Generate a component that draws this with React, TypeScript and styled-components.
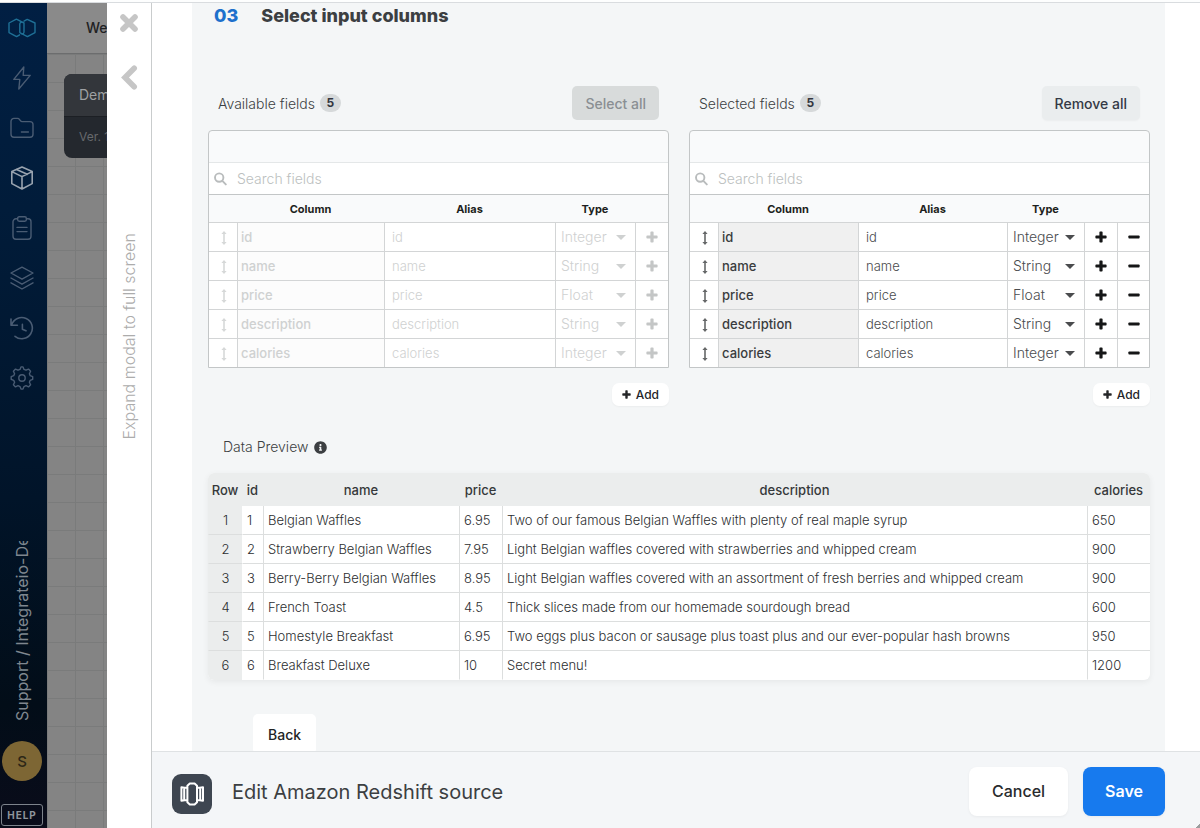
import React from 'react';
import styled, { createGlobalStyle, css } from 'styled-components';
import { FaInfoCircle } from 'react-icons/fa';

const GlobalStyle = createGlobalStyle`
  *, *::before, *::after { box-sizing: border-box; }
  body {
    margin: 0;
    background: #fff;
    font-family: Inter, "Liberation Sans", sans-serif;
    color: #3c3f42;
  }
  button, input, select { font-family: inherit; color: inherit; }
  button { cursor: pointer; }
`;

/* ---------- page frame ---------- */

const Page = styled.div`
  display: flex;
  flex-direction: column;
  height: 100vh;
  overflow: hidden;
`;

const TopStrip = styled.div`
  flex: none;
  height: 3px;
  background: #fdfefe;
  border-bottom: 1px solid #d9dcdf;
`;

const Shell = styled.div`
  flex: 1;
  min-height: 0;
  display: flex;
`;

/* ---------- side navigation ---------- */

const Sidebar = styled.nav`
  flex: none;
  width: 47px;
  display: flex;
  flex-direction: column;
  align-items: center;
  padding-right: 3px;
  background: linear-gradient(#011f43 0%, #011c3a 25%, #011429 60%, #020d18 85%, #0a0c1a 100%);
`;

const NavLink = styled.a<{ $active?: boolean; $brand?: boolean }>`
  display: flex;
  align-items: center;
  justify-content: center;
  width: 44px;
  height: 50px;
  color: ${(p) => (p.$brand ? '#1f7096' : p.$active ? '#99a3af' : '#4a5c73')};
`;

const AccountName = styled.div`
  margin-top: auto;
  height: 180px;
  overflow: hidden;
  writing-mode: vertical-rl;
  transform: rotate(180deg);
  white-space: nowrap;
  font-size: 16px;
  line-height: 20px;
  font-weight: 400;
  color: #7f878f;
`;

const Avatar = styled.button`
  flex: none;
  width: 40px;
  height: 40px;
  margin-top: 20px;
  padding: 0;
  border: 0;
  border-radius: 50%;
  background: #7d6634;
  color: #2c2617;
  font-size: 15px;
  font-weight: 500;
`;

const HelpButton = styled.button`
  flex: none;
  width: 42px;
  height: 22px;
  margin: 23px 0 2px;
  padding: 0;
  border: 1px solid #7d838b;
  border-radius: 3px;
  background: transparent;
  color: #8e949b;
  font-size: 10px;
  font-weight: 700;
  letter-spacing: 1px;
`;

/* ---------- dimmed workspace ---------- */

const Workspace = styled.div`
  flex: none;
  width: 60px;
  overflow: hidden;
  display: flex;
  flex-direction: column;
  background: #848484;
`;

const WorkspaceBar = styled.div`
  flex: none;
  height: 51px;
  padding-left: 39px;
  border-bottom: 1px solid #6c6d6e;
  background: #8a8a8a;
  color: #202122;
  font-size: 14px;
  font-weight: 500;
  line-height: 50px;
  white-space: nowrap;
`;

const Canvas = styled.div`
  flex: 1;
  padding: 20px 0 0 17px;
  background-image:
    linear-gradient(#7a7b7b 1px, transparent 1px),
    linear-gradient(90deg, #7a7b7b 1px, transparent 1px);
  background-size: 28px 28px;
`;

const PackageCard = styled.div`
  width: 180px;
  border-radius: 8px;
  overflow: hidden;
  background: #24282e;
`;

const PackageName = styled.div`
  height: 43px;
  padding-left: 15px;
  border-bottom: 1px solid #1c1f24;
  background: #33363b;
  color: #9fa1a3;
  font-size: 14px;
  line-height: 42px;
`;

const PackageVersion = styled.div`
  height: 41px;
  padding-left: 15px;
  color: #67696c;
  font-size: 12px;
  line-height: 40px;
`;

/* ---------- modal ---------- */

const Rail = styled.div`
  flex: none;
  width: 45px;
  display: flex;
  flex-direction: column;
  align-items: center;
  padding-top: 8px;
  border-right: 1px solid #c9cccd;
  background: #fff;
`;

const RailButton = styled.button`
  display: flex;
  align-items: center;
  justify-content: center;
  width: 28px;
  height: 24px;
  margin-bottom: 30px;
  padding: 0;
  border: 0;
  background: none;
  color: #c6c6c6;
`;

const ExpandButton = styled.button`
  margin-top: 114px;
  padding: 0;
  border: 0;
  background: none;
  writing-mode: vertical-rl;
  transform: rotate(180deg);
  color: #acacac;
  font-size: 16px;
  font-weight: 300;
  line-height: 20px;
  white-space: nowrap;
`;

const Modal = styled.main`
  flex: 1;
  min-width: 0;
  display: flex;
  flex-direction: column;
  background: #fff;
`;

const ModalBody = styled.div`
  flex: 1;
  min-height: 0;
  overflow: hidden;
  padding: 0 35px 0 40px;
`;

const Step = styled.section`
  min-height: 100%;
  padding: 0 15px 0 16px;
  background: #f4f6f7;
`;

const StepTitle = styled.h2`
  display: flex;
  gap: 23px;
  margin: 0 0 57px;
  padding-left: 6px;
  font-size: 18px;
  font-weight: 800;
  line-height: 26px;
`;

const StepNumber = styled.span`
  color: #1d70cc;
`;

const FieldPanels = styled.div`
  display: grid;
  grid-template-columns: 1fr 1fr;
  gap: 20px;
`;

const PanelHead = styled.div`
  display: flex;
  align-items: center;
  gap: 5px;
  height: 34px;
  margin-bottom: 10px;
  padding: 0 10px;
  font-size: 14px;
  font-weight: 300;
`;

const CountBadge = styled.span`
  min-width: 21px;
  border-radius: 9px;
  background: #d6d9da;
  color: #33363f;
  font-size: 12px;
  font-weight: 700;
  line-height: 18px;
  text-align: center;
`;

const BulkButton = styled.button`
  margin-left: auto;
  height: 34px;
  padding: 0 13px;
  border: 0;
  border-radius: 5px;
  background: #eaedee;
  color: #343945;
  font-size: 14px;
  font-weight: 500;
  box-shadow: 0 1px 2px rgba(0, 0, 0, 0.04);
  &:disabled { background: #d8dbdb; color: #8a8f93; cursor: default; box-shadow: none; }
`;

const FieldBox = styled.div`
  border: 1px solid #c3c6c7;
  border-radius: 4px 4px 0 0;
  background: #f9fafb;
`;

const SearchRow = styled.label`
  display: flex;
  align-items: center;
  gap: 10px;
  height: 32px;
  margin-top: 31px;
  padding-left: 5px;
  border-top: 1px solid #e4e7e8;
  background: #fff;
  color: #b9bcbd;
`;

const SearchInput = styled.input`
  flex: 1;
  min-width: 0;
  padding: 0;
  border: 0;
  outline: 0;
  background: none;
  font-size: 14px;
  font-weight: 300;
  &::placeholder { color: #bcbfc0; opacity: 1; }
`;

const FieldTable = styled.table`
  width: 100%;
  table-layout: fixed;
  border-spacing: 0;
  border-top: 1px solid #c3c6c7;
`;

const FieldTh = styled.th<{ $w?: number }>`
  width: ${(p) => (p.$w ? `${p.$w}px` : 'auto')};
  height: 27px;
  padding: 0;
  color: #1d1f20;
  font-size: 11px;
  font-weight: 700;
`;

const FieldTd = styled.td<{ $name?: boolean; $center?: boolean; $muted?: boolean }>`
  height: 29px;
  padding: 0 0 0 ${(p) => (p.$center ? 0 : p.$name ? 3 : 4)}px;
  border-top: 1px solid #d3d5d6;
  border-left: 1px solid #d3d5d6;
  background: #fff;
  color: #4a4c4e;
  font-size: 13px;
  line-height: 20px;
  text-align: ${(p) => (p.$center ? 'center' : 'left')};
  &:first-child { border-left: 0; padding-left: 2px; }
  ${(p) => p.$name && css`
    background: ${p.$muted ? '#fcfcfc' : '#f0f0f0'};
    color: #3a3c3e;
    font-weight: 500;
  `}
  ${(p) => p.$muted && css`color: #cfd1d1;`}
  svg { display: block; margin: 0 auto; }
`;

const AliasInput = styled.input`
  display: block;
  width: 100%;
  height: 28px;
  padding: 0 3px;
  border: 0;
  outline: 0;
  background: none;
  font-size: 13px;
  font-weight: 300;
`;

const TypePicker = styled.div`
  display: grid;
  align-items: center;
  > * { grid-area: 1 / 1; }
`;

const TypeSelect = styled.select`
  appearance: none;
  height: 28px;
  padding: 0 0 2px 1px;
  border: 0;
  background: none;
  font-size: 14px;
  font-weight: 300;
  opacity: 1;
  &:disabled { opacity: 1; color: inherit; }
`;

const CaretHolder = styled.span`
  justify-self: end;
  padding-right: 9px;
  pointer-events: none;
`;

const IconButton = styled.button`
  display: block;
  width: 100%;
  height: 28px;
  padding: 0;
  border: 0;
  background: none;
  color: ${(p) => (p.disabled ? '#c4c6c6' : '#151617')};
`;

const PanelFoot = styled.div`
  display: flex;
  justify-content: flex-end;
  margin-top: 15px;
`;

const AddButton = styled.button`
  display: flex;
  align-items: center;
  gap: 5px;
  height: 23px;
  padding: 0 10px;
  border: 0;
  border-radius: 7px;
  background: #fff;
  color: #242628;
  font-size: 12px;
  font-weight: 500;
  box-shadow: 0 1px 2px rgba(0, 0, 0, 0.04);
`;

const PreviewTitle = styled.h3`
  display: flex;
  align-items: center;
  gap: 6px;
  margin: 31px 0 16px;
  padding-left: 15px;
  font-size: 14px;
  font-weight: 300;
  line-height: 20px;
`;

const PreviewTable = styled.table`
  width: 100%;
  table-layout: fixed;
  border-spacing: 0;
  border-radius: 6px;
  overflow: hidden;
  background: #fff;
  box-shadow: 0 2px 6px rgba(0, 0, 0, 0.06);
`;

const PreviewTh = styled.th<{ $w?: number }>`
  width: ${(p) => (p.$w ? `${p.$w}px` : 'auto')};
  height: 33px;
  padding: 0;
  background: #ebeded;
  color: #35383a;
  font-size: 13px;
  font-weight: 500;
  white-space: nowrap;
`;

const PreviewTd = styled.td`
  height: 29px;
  padding: 0 0 0 4px;
  border-bottom: 1px solid #dcdede;
  border-left: 1px solid #dcdede;
  color: #2c2e30;
  font-size: 13px;
  font-weight: 300;
  line-height: 20px;
  white-space: nowrap;
  tr:last-child > & { border-bottom-color: transparent; }
  &:nth-child(-n + 2) { border-left-color: transparent; }
  &:first-child { padding-left: 0; background: #ebeded; text-align: center; }
`;

const BackButton = styled.button`
  display: block;
  height: 40px;
  margin: 34px 0 0 45px;
  padding: 0 15px;
  border: 0;
  border-radius: 5px;
  background: #fff;
  color: #222426;
  font-size: 14px;
  font-weight: 500;
`;

const ModalFooter = styled.footer`
  position: relative;
  flex: none;
  display: flex;
  align-items: center;
  height: 77px;
  padding: 0 35px 0 20px;
  border-top: 1px solid #dfe2e4;
  background: #f4f6f8;
`;

const SourceIcon = styled.span`
  display: flex;
  align-items: center;
  justify-content: center;
  width: 40px;
  height: 40px;
  margin: 7px 20px 0 0;
  border-radius: 9px;
  background: #3e4651;
`;

const FooterTitle = styled.h1`
  margin: 0 auto 0 0;
  padding-top: 4px;
  font-size: 20px;
  font-weight: 400;
  line-height: 28px;
`;

const FooterButton = styled.button<{ $primary?: boolean }>`
  height: 49px;
  margin: 3px 0 0 15px;
  padding: 0 ${(p) => (p.$primary ? 22 : 23)}px 2px;
  border: 0;
  border-radius: 8px;
  background: ${(p) => (p.$primary ? '#177aee' : '#fff')};
  color: ${(p) => (p.$primary ? '#fff' : '#292b2d')};
  font-size: 16px;
  font-weight: ${(p) => (p.$primary ? 600 : 500)};
  box-shadow: 0 1px 3px rgba(0, 0, 0, 0.05);
`;

const ResizeGrip = styled.span`
  position: absolute;
  right: 0;
  bottom: 0;
  width: 4px;
  height: 4px;
  background: linear-gradient(135deg, transparent 50%, #9b9d9e 50%);
`;

/* ---------- icons ---------- */

const Line = ({ children, size = 24, w = 1.4 }: { children: React.ReactNode; size?: number; w?: number }) => (
  <svg width={size} height={size} viewBox="0 0 24 24" fill="none" stroke="currentColor" strokeWidth={w}
    strokeLinecap="round" strokeLinejoin="round" aria-hidden="true">{children}</svg>
);

const BrandIcon = () => (
  <svg width="28" height="20" viewBox="0 0 28 20" fill="none" stroke="currentColor" strokeWidth="1.4" strokeLinejoin="round" strokeLinecap="round" aria-hidden="true">
    <path d="M11.6 16.800 8.600 18.600 1 14.600V5l7.400-3.800 7.600 3.800v9.200a2 2 0 0 1-2 1.800" />
    <path d="M16 3.200l3.200-1.800L27 5v9.600l-7.600 4-7.600-4V5.800a2 2 0 0 1 1.600-1.600" />
  </svg>
);

const BoltIcon = () => <Line><path d="M13.800 1 3.800 13.400h6L8.800 23 20.200 9.400h-7z" /></Line>;
const FolderIcon = () => (
  <Line><path d="M1 5.4a3 3 0 0 1 3-3h3.6a2.2 2.2 0 0 1 1.8.9l1 1.4a2.2 2.2 0 0 0 1.8.9H20a3 3 0 0 1 3 3v9.6a3 3 0 0 1-3 3H4a3 3 0 0 1-3-3zM11.4 16h7" /></Line>
);
const BoxIcon = () => (
  <Line w={1.6}><path d="M12 1 22.2 5.6v12L12 23 1.8 17.6v-12zM1.8 5.6 12 10.6l10.2-5M12 10.6V23M6.6 3.400l10.600 4.900" /></Line>
);
const ClipboardIcon = () => (
  <Line>
    <path d="M7.600 2.800H6a3 3 0 0 0-3 3v14.400a3 3 0 0 0 3 3h12a3 3 0 0 0 3-3V5.800a3 3 0 0 0-3-3h-1.600" />
    <rect x="7.600" y=".8" width="8.800" height="4.400" rx="1.600" />
    <path d="M7 11.400h10M7 15.600h10" />
  </Line>
);
const LayersIcon = () => <Line><path d="M12 1.200 23 7l-11 6.200L1 7zM1 12l11 6.200L23 12M1 16.800 12 23l11-6.200" /></Line>;
const HistoryIcon = () => (
  <Line w={1.6}><path d="M1 3v6.200h6.400M1.600 9A10.600 10.600 0 1 1 5 20.300M12.400 8.400v4.800l3.600 1.600" /></Line>
);
const GearIcon = () => (
  <Line>
    <circle cx="12" cy="12" r="3.200" />
    <path d="M10 3.400 11 .9h2l1 2.500 2 .8 2.500-1.100 2.100 2.100-1.200 2.500.8 2 2.500 1v2.600l-2.500 1-.8 2 1.200 2.500-2.100 2.100-2.500-1.200-2 .9-1 2.500h-2l-1-2.500-2-.9-2.500 1.200-2.100-2.100 1.200-2.500-.9-2-2.500-1v-2.600l2.500-1 .9-2-1.200-2.500 2.100-2.100L8 4.200z" />
  </Line>
);
const CloseIcon = () => (
  <svg width="18" height="18" viewBox="0 0 18 18" fill="none" stroke="currentColor" strokeWidth="5.600" strokeLinecap="round" aria-hidden="true">
    <path d="M3 3l12 12M15 3 3 15" />
  </svg>
);
const ChevronIcon = () => (
  <svg width="17" height="26" viewBox="0 0 17 26" fill="none" stroke="currentColor" strokeWidth="5.600" strokeLinecap="round" aria-hidden="true">
    <path d="M13.200 4.200 4 13.400l9.200 9.400" />
  </svg>
);
const SearchIcon = () => (
  <svg width="13" height="14" viewBox="0 0 13 14" fill="none" stroke="currentColor" strokeWidth="1.900" strokeLinecap="round" aria-hidden="true">
    <circle cx="5.200" cy="5.600" r="4.200" /><path d="M8.600 9.100l3.200 3.300" />
  </svg>
);
const DragIcon = () => (
  <svg width="6" height="16" viewBox="0 0 6 16" aria-hidden="true">
    <path d="M3 2l2.600 3H3.800v8h1.800L3 16 .4 13h1.800V5H.4z" fill="currentColor" opacity=".85" />
  </svg>
);
const CaretIcon = () => (
  <svg width="10" height="5" viewBox="0 0 10 5" aria-hidden="true"><path d="M0 0h10L5 5z" fill="currentColor" /></svg>
);
const PlusIcon = ({ size = 12 }: { size?: number }) => (
  <svg width={size} height={size} viewBox="0 0 12 12" aria-hidden="true">
    <path d="M4.400 1.200a.8.8 0 0 1 .8-.8h1.600a.8.8 0 0 1 .8.8v3.200h3.200a.8.8 0 0 1 .8.8v1.600a.8.8 0 0 1-.8.8H7.600v3.200a.8.8 0 0 1-.8.8H5.200a.8.8 0 0 1-.8-.8V7.600H1.200a.8.8 0 0 1-.8-.8V5.200a.8.8 0 0 1 .8-.8h3.200z" fill="currentColor" />
  </svg>
);
const MinusIcon = () => (
  <svg width="12" height="12" viewBox="0 0 12 12" aria-hidden="true">
    <rect x=".4" y="4.400" width="11.200" height="3.200" rx=".8" fill="currentColor" />
  </svg>
);
const RedshiftIcon = () => (
  <svg width="26" height="24" viewBox="0 0 26 24" fill="none" stroke="#fff" strokeWidth="2" strokeLinejoin="round" aria-hidden="true">
    <path d="M8.400 3.800 10.800 1.600h4.800L18 3.800v16.400l-2.400 2.200h-4.800l-2.400-2.200z" />
    <path d="M8.400 5.800H5.600L2.400 5.200v13.600l3.200-.6h2.800M5.200 6v12M18 5.800h2.800l3.200-.6v13.600l-3.200-.6H18M21.200 6v12" />
  </svg>
);

/* ---------- data ---------- */

const fields = [
  { name: 'id', type: 'Integer' },
  { name: 'name', type: 'String' },
  { name: 'price', type: 'Float' },
  { name: 'description', type: 'String' },
  { name: 'calories', type: 'Integer' },
];

const previewRows = [
  ['1', 'Belgian Waffles', '6.95', 'Two of our famous Belgian Waffles with plenty of real maple syrup', '650'],
  ['2', 'Strawberry Belgian Waffles', '7.95', 'Light Belgian waffles covered with strawberries and whipped cream', '900'],
  ['3', 'Berry-Berry Belgian Waffles', '8.95', 'Light Belgian waffles covered with an assortment of fresh berries and whipped cream', '900'],
  ['4', 'French Toast', '4.5', 'Thick slices made from our homemade sourdough bread', '600'],
  ['5', 'Homestyle Breakfast', '6.95', 'Two eggs plus bacon or sausage plus toast plus and our ever-popular hash browns', '950'],
  ['6', 'Breakfast Deluxe', '10', 'Secret menu!', '1200'],
];

const navItems = [
  { label: 'Connections', icon: <BoltIcon /> },
  { label: 'Files', icon: <FolderIcon /> },
  { label: 'Packages', icon: <BoxIcon />, active: true },
  { label: 'Jobs', icon: <ClipboardIcon /> },
  { label: 'Clusters', icon: <LayersIcon /> },
  { label: 'Schedules', icon: <HistoryIcon /> },
  { label: 'Settings', icon: <GearIcon /> },
];

/* ---------- field panel ---------- */

interface PanelProps {
  title: string;
  action: string;
  muted?: boolean;
  nameWidth: number;
  typeWidth: number;
}

function FieldPanel({ title, action, muted, nameWidth, typeWidth }: PanelProps) {
  return (
    <div>
      <PanelHead>
        <span>{title}</span>
        <CountBadge>{fields.length}</CountBadge>
        <BulkButton type="button" disabled={muted}>{action}</BulkButton>
      </PanelHead>
      <FieldBox>
        <SearchRow>
          <SearchIcon />
          <SearchInput type="text" placeholder="Search fields" aria-label={`Search ${title}`} />
        </SearchRow>
        <FieldTable>
          <thead>
            <tr>
              <FieldTh $w={28} />
              <FieldTh $w={nameWidth}>Column</FieldTh>
              <FieldTh>Alias</FieldTh>
              <FieldTh $w={typeWidth}>Type</FieldTh>
              <FieldTh $w={33} />
              {!muted && <FieldTh $w={32} />}
            </tr>
          </thead>
          <tbody>
            {fields.map((f) => (
              <tr key={f.name}>
                <FieldTd $center $muted={muted}><DragIcon /></FieldTd>
                <FieldTd $name $muted={muted}>{f.name}</FieldTd>
                <FieldTd $muted={muted}>
                  <AliasInput type="text" defaultValue={f.name} readOnly={muted} aria-label={`Alias of ${f.name}`} />
                </FieldTd>
                <FieldTd $muted={muted}>
                  <TypePicker>
                    <TypeSelect defaultValue={f.type} disabled={muted} aria-label={`Type of ${f.name}`}>
                      <option>Integer</option>
                      <option>String</option>
                      <option>Float</option>
                    </TypeSelect>
                    <CaretHolder><CaretIcon /></CaretHolder>
                  </TypePicker>
                </FieldTd>
                <FieldTd $center $muted={muted}>
                  <IconButton type="button" disabled={muted} aria-label={`Add ${f.name}`}><PlusIcon /></IconButton>
                </FieldTd>
                {!muted && (
                  <FieldTd $center>
                    <IconButton type="button" aria-label={`Remove ${f.name}`}><MinusIcon /></IconButton>
                  </FieldTd>
                )}
              </tr>
            ))}
          </tbody>
        </FieldTable>
      </FieldBox>
      <PanelFoot>
        <AddButton type="button"><PlusIcon size={9} />Add</AddButton>
      </PanelFoot>
    </div>
  );
}

export default function App() {
  return (
    <>
      <GlobalStyle />
      <Page>
        <TopStrip />
        <Shell>
          <Sidebar>
            <NavLink href="#home" $brand aria-label="Home"><BrandIcon /></NavLink>
            {navItems.map((n) => (
              <NavLink key={n.label} href={`#${n.label.toLowerCase()}`} $active={n.active} aria-label={n.label}>{n.icon}</NavLink>
            ))}
            <AccountName>Support / Integrateio-De</AccountName>
            <Avatar type="button">S</Avatar>
            <HelpButton type="button">HELP</HelpButton>
          </Sidebar>
          <Workspace>
            <WorkspaceBar>We</WorkspaceBar>
            <Canvas>
              <PackageCard>
                <PackageName>Dem</PackageName>
                <PackageVersion>Ver. 1</PackageVersion>
              </PackageCard>
            </Canvas>
          </Workspace>
          <Rail>
            <RailButton type="button" aria-label="Close"><CloseIcon /></RailButton>
            <RailButton type="button" aria-label="Previous"><ChevronIcon /></RailButton>
            <ExpandButton type="button">Expand modal to full screen</ExpandButton>
          </Rail>
          <Modal>
            <ModalBody>
              <Step>
                <StepTitle><StepNumber>03</StepNumber><span>Select input columns</span></StepTitle>
                <FieldPanels>
                  <FieldPanel title="Available fields" action="Select all" muted nameWidth={147} typeWidth={80} />
                  <FieldPanel title="Selected fields" action="Remove all" nameWidth={140} typeWidth={77} />
                </FieldPanels>
                <PreviewTitle>Data Preview <FaInfoCircle size={13} /></PreviewTitle>
                <PreviewTable>
                  <thead>
                    <tr>
                      <PreviewTh $w={34}>Row</PreviewTh>
                      <PreviewTh $w={21}>id</PreviewTh>
                      <PreviewTh $w={196}>name</PreviewTh>
                      <PreviewTh $w={43}>price</PreviewTh>
                      <PreviewTh>description</PreviewTh>
                      <PreviewTh $w={63}>calories</PreviewTh>
                    </tr>
                  </thead>
                  <tbody>
                    {previewRows.map((row, i) => (
                      <tr key={row[0]}>
                        <PreviewTd>{i + 1}</PreviewTd>
                        {row.map((cell, j) => <PreviewTd key={j}>{cell}</PreviewTd>)}
                      </tr>
                    ))}
                  </tbody>
                </PreviewTable>
                <BackButton type="button">Back</BackButton>
              </Step>
            </ModalBody>
            <ModalFooter>
              <SourceIcon><RedshiftIcon /></SourceIcon>
              <FooterTitle>Edit Amazon Redshift source</FooterTitle>
              <FooterButton type="button">Cancel</FooterButton>
              <FooterButton type="button" $primary>Save</FooterButton>
              <ResizeGrip />
            </ModalFooter>
          </Modal>
        </Shell>
      </Page>
    </>
  );
}
